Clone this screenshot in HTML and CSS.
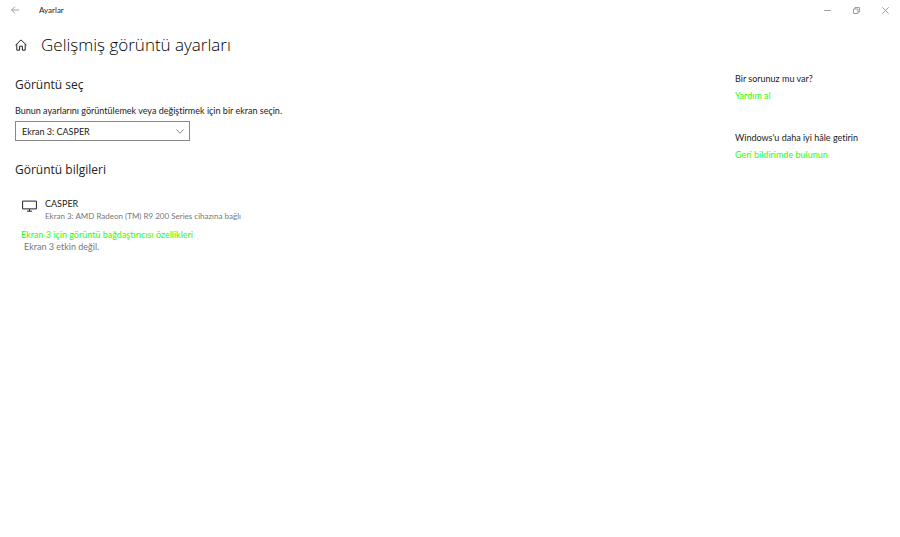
FILE: index.html
```html
<!DOCTYPE html>
<html lang="tr">
<head>
    <meta charset="utf-8">
    <meta name="viewport" content="width=device-width, initial-scale=1.0">
    <title>Ayarlar</title>
    <link rel="stylesheet" href="styles.css">
</head>
<body>
<header class="titlebar">
    <button class="back-button" type="button" aria-label="Geri">
        <svg width="8" height="8" viewBox="0 0 8 8"><path d="M8 4H.6M4 .6L.6 4L4 7.4"/></svg>
    </button>
    <span class="app-name">Ayarlar</span>
    <div class="window-controls">
        <button type="button" aria-label="Simge durumuna küçült">
            <svg width="7" height="7" viewBox="0 0 7 7"><path d="M0 3.5H7"/></svg>
        </button>
        <button type="button" aria-label="Önceki boyut">
            <svg width="7" height="7" viewBox="0 0 7 7"><path d="M.5 2H5V6.5H.5ZM2 2V.5H6.5V5H5"/></svg>
        </button>
        <button type="button" aria-label="Kapat">
            <svg width="7" height="7" viewBox="0 0 7 7"><path d="M.3 .3L6.7 6.7M6.7 .3L.3 6.7"/></svg>
        </button>
    </div>
</header>

<div class="page-header">
    <button class="home-button" type="button" aria-label="Giriş">
        <svg width="12" height="12" viewBox="0 0 12 12"><path d="M.5 6.2L6 .9L11.5 6.2M1.8 5.2V11.2H4.6V7.2H7.4V11.2H10.2V5.2"/></svg>
    </button>
    <h1>Gelişmiş görüntü ayarları</h1>
</div>

<div class="content">
    <main class="settings">
        <section class="select-section">
            <h2>Görüntü seç</h2>
            <label for="display">Bunun ayarlarını görüntülemek veya değiştirmek için bir ekran seçin.</label>
            <div class="select-box">
                <select id="display">
                    <option>Ekran 3: CASPER</option>
                </select>
                <svg class="chevron" width="8" height="5" viewBox="0 0 8 5"><path d="M.4 .5L4 4.2L7.6 .5"/></svg>
            </div>
        </section>

        <section>
            <h2>Görüntü bilgileri</h2>
            <div class="display-info">
                <svg class="monitor" width="15" height="12" viewBox="0 0 15 12"><path d="M.6 1.1H14.4V8.9H.6ZM7.5 9V11M5 11.2H10"/></svg>
                <div>
                    <p class="display-name">CASPER</p>
                    <p class="display-desc">Ekran 3: AMD Radeon (TM) R9 200 Series cihazına bağlı</p>
                </div>
            </div>
            <div class="adapter">
                <a href="#">Ekran 3 için görüntü bağdaştırıcısı özellikleri</a>
                <p class="display-state">Ekran 3 etkin değil.</p>
            </div>
        </section>
    </main>

    <aside class="help">
        <section>
            <h3>Bir sorunuz mu var?</h3>
            <a href="#">Yardım al</a>
        </section>
        <section>
            <h3>Windows'u daha iyi hâle getirin</h3>
            <a href="#">Geri bildirimde bulunun</a>
        </section>
    </aside>
</div>
</body>
</html>
```
FILE: styles.css
```css
* {
    box-sizing: border-box;
}

body {
    margin: 0;
    background-color: #fff;
    color: #222;
    font-family: Lato, "Open Sans", sans-serif;
    font-size: 9px;
    font-variant-ligatures: none;
    line-height: 12px;
}

h1, h2, h3, p {
    margin: 0;
    font-weight: normal;
}

h1, h2 {
    font-family: "Open Sans", "Noto Sans", sans-serif;
}

h3 {
    font-size: 9px;
}

button {
    display: flex;
    align-items: center;
    justify-content: center;
    padding: 0;
    border: none;
    background: none;
}

svg {
    display: block;
    fill: none;
    stroke: #222;
}

a {
    color: #1eff00;
    text-decoration: none;
}

.titlebar {
    display: flex;
    align-items: center;
    height: 20px;
}

.titlebar svg {
    stroke: #888;
    stroke-width: 0.8;
}

.back-button {
    width: 29px;
    height: 20px;
}

.app-name {
    margin-left: 10px;
    font-size: 8px;
}

.window-controls {
    display: flex;
    margin-left: auto;
}

.window-controls button {
    width: 29px;
    height: 20px;
}

.page-header {
    display: flex;
    align-items: center;
    gap: 14px;
    padding: 13px 15px 0;
}

.page-header h1 {
    color: #000;
    font-size: 17px;
    font-weight: 300;
    line-height: 24px;
}

.content {
    display: flex;
    justify-content: space-between;
    padding: 16px 15px 0;
}

.settings {
    padding-top: 3px;
}

.select-section {
    margin-bottom: 20px;
}

h2 {
    font-size: 12px;
    line-height: 18px;
}

label {
    display: block;
    margin-top: 11px;
}

.select-box {
    display: grid;
    align-items: center;
    width: 175px;
    margin-top: 4px;
}

.select-box select {
    grid-area: 1 / 1;
    height: 20px;
    padding: 1px 20px 0 6px;
    border: 1px solid #888;
    border-radius: 0;
    background-color: #fff;
    color: inherit;
    font: inherit;
    appearance: none;
}

.chevron {
    grid-area: 1 / 1;
    justify-self: end;
    margin-right: 6px;
    stroke: #666;
    stroke-width: 0.8;
    pointer-events: none;
}

.display-info {
    display: flex;
    align-items: flex-start;
    gap: 8px;
    margin-top: 19px;
    padding-left: 7px;
}

.monitor {
    margin-top: 2px;
}

.display-desc, .display-state {
    color: #777;
}

.display-desc {
    font-size: 8px;
}

.adapter {
    margin-top: 7px;
    padding-left: 6px;
}

.adapter a {
    display: block;
}

.display-state {
    padding-left: 3px;
}

.help {
    width: 150px;
}

.help section {
    margin-bottom: 30px;
}

.help a {
    display: block;
    margin-top: 5px;
}
```
